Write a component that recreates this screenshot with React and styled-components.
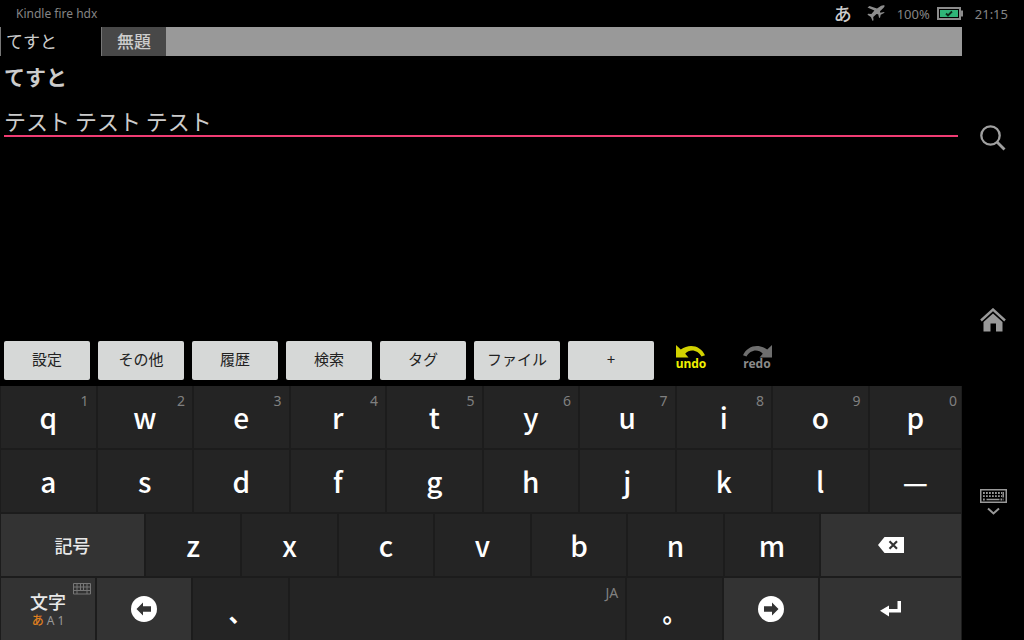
import { useState } from "react";
import styled, { createGlobalStyle } from "styled-components";

const digitRow = ["q", "w", "e", "r", "t", "y", "u", "i", "o", "p"];
const homeRow = ["a", "s", "d", "f", "g", "h", "j", "k", "l", "—"];
const bottomRow = ["z", "x", "c", "v", "b", "n", "m"];
const menus = ["設定", "その他", "履歴", "検索", "タグ", "ファイル", "+"];

export default function App() {
  const [text, setText] = useState("テスト テスト テスト");

  return (
    <>
      <GlobalStyle />
      <Screen>
        <StatusBar>
          <DeviceName>Kindle fire hdx</DeviceName>
          <ImeMark>あ</ImeMark>
          <AirplaneIcon />
          <Battery>
            100%
            <BatteryIcon />
          </Battery>
          <Clock>21:15</Clock>
        </StatusBar>

        <Body>
          <Main>
            <TabBar>
              <Tab $active>てすと</Tab>
              <Tab>無題</Tab>
            </TabBar>
            <Editor>
              <Title>てすと</Title>
              <TextInput
                aria-label="本文"
                value={text}
                onChange={(e) => setText(e.target.value)}
              />
            </Editor>
            <Toolbar>
              {menus.map((menu) => (
                <MenuButton key={menu}>{menu}</MenuButton>
              ))}
              <HistoryButton $color="#d2d200" $text="#f0f000">
                <UndoIcon />
                undo
              </HistoryButton>
              <HistoryButton $color="#6e6e6e" $text="#8a8a8a">
                <RedoIcon />
                redo
              </HistoryButton>
            </Toolbar>

            <Keyboard>
              <KeyRow $columns="repeat(9, 94fr) 91fr">
                {digitRow.map((key, i) => (
                  <Key key={key}>
                    {key}
                    <Hint $edge={key === "p"}>{(i + 1) % 10}</Hint>
                  </Key>
                ))}
              </KeyRow>
              <KeyRow $columns="repeat(9, 94fr) 91fr">
                {homeRow.map((key) => (
                  <Key key={key}>{key}</Key>
                ))}
              </KeyRow>
              <KeyRow $columns="142fr repeat(7, 94fr) 139fr">
                <LabelKey>記号</LabelKey>
                {bottomRow.map((key) => (
                  <Key key={key}>{key}</Key>
                ))}
                <Key $special aria-label="削除">
                  <BackspaceIcon />
                </Key>
              </KeyRow>
              <KeyRow $columns="94fr 94fr 94fr 335fr 94fr 94fr 141fr">
                <LabelKey>
                  文字
                  <Modes>
                    <b>あ</b> A 1
                  </Modes>
                  <Hint $edge>
                    <MiniKeyboardIcon />
                  </Hint>
                </LabelKey>
                <Key $special aria-label="左">
                  <ArrowIcon />
                </Key>
                <PunctuationKey>、</PunctuationKey>
                <Key aria-label="スペース">
                  <Hint>JA</Hint>
                </Key>
                <PunctuationKey>。</PunctuationKey>
                <Key $special aria-label="右">
                  <ArrowIcon right />
                </Key>
                <Key $special aria-label="改行">
                  <EnterIcon />
                </Key>
              </KeyRow>
            </Keyboard>
          </Main>

          <SideNav>
            <NavButton aria-label="検索">
              <SearchIcon />
            </NavButton>
            <NavButton aria-label="ホーム">
              <HomeIcon />
            </NavButton>
            <NavButton aria-label="キーボードを隠す">
              <HideKeyboardIcon />
            </NavButton>
          </SideNav>
        </Body>
      </Screen>
    </>
  );
}

function AirplaneIcon() {
  return (
    <svg width="18" height="17" viewBox="0 0 18 17" fill="#8c8c8c">
      <path d="M.5 2.500 2.500 1 10 3.500 14.200.8C15.600 0 17 0 17.500.6c.4.8-.3 1.700-1.400 2.700L13 6.200l.3 1.600 3.800-.9.400.9-3.800 2-.6 2.600-1 .5-.9-3.600-1.700-.3-3.300 3 .3 3.300-.9.7-1.700-4L.5 9.700l.6-.9 3.300.2 3-3.600z" />
    </svg>
  );
}

function BatteryIcon() {
  return (
    <svg width="26" height="14" viewBox="0 0 26 14" fill="none">
      <rect x="1" y="1" width="22" height="11" stroke="#8c8c8c" strokeWidth="2" />
      <path d="M24 3.500h2v6h-2z" fill="#8c8c8c" />
      <path d="M3 3h18v7H3z" fill="#2fb578" />
      <path d="m9 6.500 2 2 4-4" stroke="#0c2a1b" strokeWidth="1.800" />
    </svg>
  );
}

function UndoIcon() {
  return (
    <svg width="30" height="13" viewBox="0 0 30 13" fill="currentColor">
      <path d="M0 0v12.500h12.500L9.200 8.700c4.800-5.400 13-3.500 16.300 2.800l3.500-1.300C24.800.5 13.200-2 4.800 4.600z" />
    </svg>
  );
}

function RedoIcon() {
  return (
    <svg width="30" height="13" viewBox="0 0 30 13" fill="currentColor">
      <path d="M30 0v12.500H17.500l3.300-3.800C16 3.300 7.800 5.200 4.500 11.500L1 10.200C5.200.5 16.800-2 25.200 4.600z" />
    </svg>
  );
}

function BackspaceIcon() {
  return (
    <svg width="26" height="16" viewBox="0 0 26 16">
      <path d="M0 8 6.500 0H26v16H6.500z" fill="#fff" />
      <path d="m11.500 4.300 7.500 7.400m0-7.400-7.500 7.400" stroke="#333" strokeWidth="2.200" />
    </svg>
  );
}

function ArrowIcon({ right }) {
  return (
    <svg width="26" height="26" viewBox="0 0 26 26">
      <circle cx="13" cy="13" r="13" fill="#fff" />
      <path
        d={
          right
            ? "M6 10.300h8V6.500l6.500 6.500-6.500 6.500v-3.800H6z"
            : "M20 10.300h-8V6.500L5.500 13l6.500 6.500v-3.800h8z"
        }
        fill="#333"
      />
    </svg>
  );
}

function EnterIcon() {
  return (
    <svg width="21" height="16" viewBox="0 0 21 16" fill="#fff">
      <path d="M17.500 0H21v11.500H9V15.500L0 9.800 9 4.500V8h8.500z" />
    </svg>
  );
}

function MiniKeyboardIcon() {
  return (
    <svg width="18" height="12" viewBox="0 0 18 12" fill="none" stroke="#777">
      <path d="M.5.5h17v10.500H.5zM.5 4h17M.5 7.500h17M4 .5v10.500M7.500.5v7M10.500.5v7M14 .5v10.500" />
    </svg>
  );
}

function SearchIcon() {
  return (
    <svg width="26" height="26" viewBox="0 0 26 26" fill="none" stroke="#a0a0a0">
      <circle cx="10.500" cy="10.500" r="9.200" strokeWidth="2.300" />
      <path d="m17 17 7.500 7.500" strokeWidth="2.800" />
    </svg>
  );
}

function HomeIcon() {
  return (
    <svg width="26" height="24" viewBox="0 0 26 24">
      <path d="m1 12.500 12-11 12 11" fill="none" stroke="#999" strokeWidth="2.400" />
      <path d="m13 5.500 9.500 8.500v9.500h-6.500v-8h-5.500v8H3.500V14z" fill="#999" />
    </svg>
  );
}

function HideKeyboardIcon() {
  return (
    <svg width="27" height="26" viewBox="0 0 27 26" fill="none" stroke="#999">
      <path d="M.75.75h25.500v12.500H.75z" strokeWidth="1.500" />
      <path d="M3 4h19M3 7.200h19M3 10.500h3M20.500 10.500H24" strokeWidth="1.800" strokeDasharray="1.800 1.200" />
      <path d="M6.500 10.500h13M23.200 3v5.500" strokeWidth="1.500" />
      <path d="m8 19.500 5.500 5 5.500-5" strokeWidth="2" />
    </svg>
  );
}

const GlobalStyle = createGlobalStyle`
  * {
    box-sizing: border-box;
  }

  body {
    margin: 0;
    background: #000;
    font-family: "Noto Sans", "Noto Sans CJK JP", sans-serif;
  }

  button {
    margin: 0;
    padding: 0;
    border: none;
    background: none;
    font-family: inherit;
  }

  svg {
    display: block;
    flex-shrink: 0;
  }
`;

const Screen = styled.div`
  min-height: 100vh;
  display: flex;
  flex-direction: column;
  background: #000;
`;

const StatusBar = styled.header`
  height: 27px;
  padding: 0 16px;
  display: flex;
  align-items: center;
  gap: 12px;
  color: #858585;
  font-size: 13px;
  line-height: 26px;
`;

const DeviceName = styled.span`
  flex: 1;
  font-size: 12px;
`;

const ImeMark = styled.span`
  padding-right: 3px;
  color: #ccc;
  font-size: 18px;
  font-weight: 500;
`;

const Battery = styled.span`
  display: flex;
  align-items: center;
  gap: 7px;
`;

const Clock = styled.time``;

const Body = styled.div`
  flex: 1;
  display: flex;
`;

const Main = styled.main`
  flex: 1;
  min-width: 0;
  display: flex;
  flex-direction: column;
`;

const TabBar = styled.nav`
  height: 29px;
  display: flex;
  background: #999;
`;

const Tab = styled.button`
  min-width: ${({ $active }) => ($active ? "101px" : "65px")};
  padding: ${({ $active }) => ($active ? "0 5px" : "0 15px")};
  border-left: 1px solid #777;
  background: ${({ $active }) => ($active ? "#000" : "#484848")};
  color: #ccc;
  font-size: 17px;
  font-weight: ${({ $active }) => ($active ? 400 : 500)};
  line-height: 28px;
  text-align: left;
`;

const Editor = styled.section`
  flex: 1;
  padding: 5px 4px;
`;

const Title = styled.h1`
  margin: 0 0 12px;
  color: #ccc;
  font-size: 21px;
  font-weight: 700;
  line-height: 32px;
`;

const TextInput = styled.input`
  width: 100%;
  height: 32px;
  padding: 0;
  border: none;
  border-bottom: 2px solid #f03c74;
  outline: none;
  background: none;
  color: #ccc;
  font-family: "Noto Sans CJK JP", sans-serif;
  font-size: 22px;
`;

const Toolbar = styled.div`
  padding: 0 4px 6px;
  display: flex;
  gap: 8px;
`;

const MenuButton = styled.button`
  width: 86px;
  height: 39px;
  padding-bottom: 4px;
  border-radius: 2px;
  background: #d6d8d7;
  color: #222;
  font-size: 15px;
`;

const HistoryButton = styled.button`
  width: 58px;
  height: 34px;
  padding-top: 4px;
  display: flex;
  flex-direction: column;
  align-items: center;
  color: ${({ $text }) => $text};
  font-size: 12px;
  font-weight: 700;
  line-height: 12px;

  svg {
    color: ${({ $color }) => $color};
  }
`;

const Keyboard = styled.section`
  padding-left: 1px;
  padding-right: 1px;
  display: grid;
  gap: 2px;
  background: #1c1c1c;
`;

const KeyRow = styled.div`
  height: 62px;
  display: grid;
  grid-template-columns: ${({ $columns }) => $columns};
  gap: 2px;
`;

const Key = styled.button`
  position: relative;
  min-width: 0;
  display: flex;
  justify-content: center;
  align-items: center;
  background: ${({ $special }) => ($special ? "#333" : "#242424")};
  color: #fff;
  font-family: "Noto Sans CJK JP", sans-serif;
  font-size: 28px;
  font-weight: 500;
`;

const PunctuationKey = styled(Key)`
  padding: 4px 0 0;
  font-size: 24px;
  font-weight: 700;
`;

const LabelKey = styled(Key).attrs({ $special: true })`
  flex-direction: column;
  color: #e8e8e8;
  font-size: 18px;
  line-height: 20px;
`;

const Modes = styled.span`
  padding-top: 3px;
  color: #999;
  font-family: "Noto Sans", "Noto Sans CJK JP", sans-serif;
  font-size: 12px;
  font-weight: 400;
  line-height: 14px;

  b {
    color: #e08020;
    font-weight: 500;
  }
`;

const Hint = styled.span`
  position: absolute;
  top: 5px;
  right: ${({ $edge }) => ($edge ? "4px" : "7px")};
  color: #808080;
  font-family: "Noto Sans", sans-serif;
  font-size: 14px;
  font-weight: 400;
  line-height: 20px;
`;

const SideNav = styled.nav`
  width: 62px;
  padding: 98px 0 125px;
  display: flex;
  flex-direction: column;
  justify-content: space-between;
  align-items: center;
`;

const NavButton = styled.button``;
